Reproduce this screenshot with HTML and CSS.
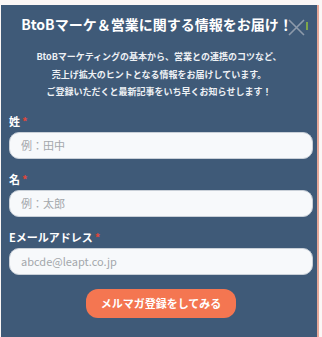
FILE: index.html
```html
<!DOCTYPE html>
<html lang="ja">
<head>
    <meta charset="UTF-8">
    <meta name="viewport" content="width=device-width, initial-scale=1.0">
    <title>メルマガ登録</title>
    <link rel="stylesheet" href="styles.css">
</head>
<body>
    <div class="modal">
        <button class="close" aria-label="閉じる">
            <svg width="17" height="17" viewBox="0 0 17 17">
                <path d="M1 1 L16 16 M16 1 L1 16" stroke="#8d9aab" stroke-width="1.6" fill="none"/>
            </svg>
        </button>
        <span class="mark"></span>

        <h2>BtoBマーケ＆営業に関する情報をお届け！</h2>
        <p class="lead">
            BtoBマーケティングの基本から、営業との連携のコツなど、<br>
            売上げ拡大のヒントとなる情報をお届けしています。<br>
            ご登録いただくと最新記事をいち早くお知らせします！
        </p>

        <form class="signup">
            <label class="field">
                <span class="label">姓<em>*</em></span>
                <input type="text" placeholder="例：田中">
            </label>
            <label class="field">
                <span class="label">名<em>*</em></span>
                <input type="text" placeholder="例：太郎">
            </label>
            <label class="field">
                <span class="label">Eメールアドレス<em>*</em></span>
                <input type="email" placeholder="abcde@leapt.co.jp">
            </label>
            <button type="submit" class="submit">メルマガ登録をしてみる</button>
        </form>
    </div>
</body>
</html>
```

FILE: styles.css
```css
body {
    margin: 0;
    background-color: #fbf7f6;
    font-family: "Noto Sans CJK JP", "Noto Sans", sans-serif;
}
.modal {
    position: relative;
    box-sizing: border-box;
    width: 318px;
    height: 332px;
    margin: 5px 0 0 1px;
    padding: 8px 8px 0 8px;
    background-color: #3f5a78;
    border-right: 2px solid #e6a899;
}
.close {
    position: absolute;
    top: 14px;
    right: 12px;
    padding: 0;
    border: none;
    background: none;
    cursor: pointer;
}
.mark {
    position: absolute;
    top: 17px;
    right: 9px;
    width: 2px;
    height: 8px;
    background-color: #7fa64a;
}
h2 {
    margin: 0 0 0 -4px;
    font-size: 14px;
    line-height: 22px;
    font-weight: bold;
    color: #ffffff;
    text-align: center;
    white-space: nowrap;
}
.lead {
    margin: 13px 0 0;
    font-size: 9px;
    line-height: 17.5px;
    font-weight: bold;
    color: #eef1f5;
    text-align: center;
}
.signup {
    margin-top: 12px;
}
.field {
    display: block;
    margin-bottom: 12px;
}
.label {
    display: block;
    font-size: 11px;
    line-height: 16px;
    font-weight: bold;
    color: #ffffff;
    margin-bottom: 3px;
}
.label em {
    font-style: normal;
    color: #e0473a;
    margin-left: 2px;
}
.field input {
    display: block;
    box-sizing: border-box;
    width: 304px;
    height: 27px;
    padding: 0 11px;
    border: 1px solid #c9d0d8;
    border-radius: 10px;
    background-color: #f7f9fb;
    font-family: inherit;
    font-size: 11px;
    color: #333;
}
.field input::placeholder {
    color: #a3a7ab;
}
.submit {
    display: block;
    width: 150px;
    height: 29px;
    margin: 14px auto 0;
    transform: translateX(2px);
    border: none;
    border-radius: 12px;
    background-color: #f47651;
    color: #ffffff;
    font-family: inherit;
    font-size: 11px;
    font-weight: bold;
    cursor: pointer;
}
```
